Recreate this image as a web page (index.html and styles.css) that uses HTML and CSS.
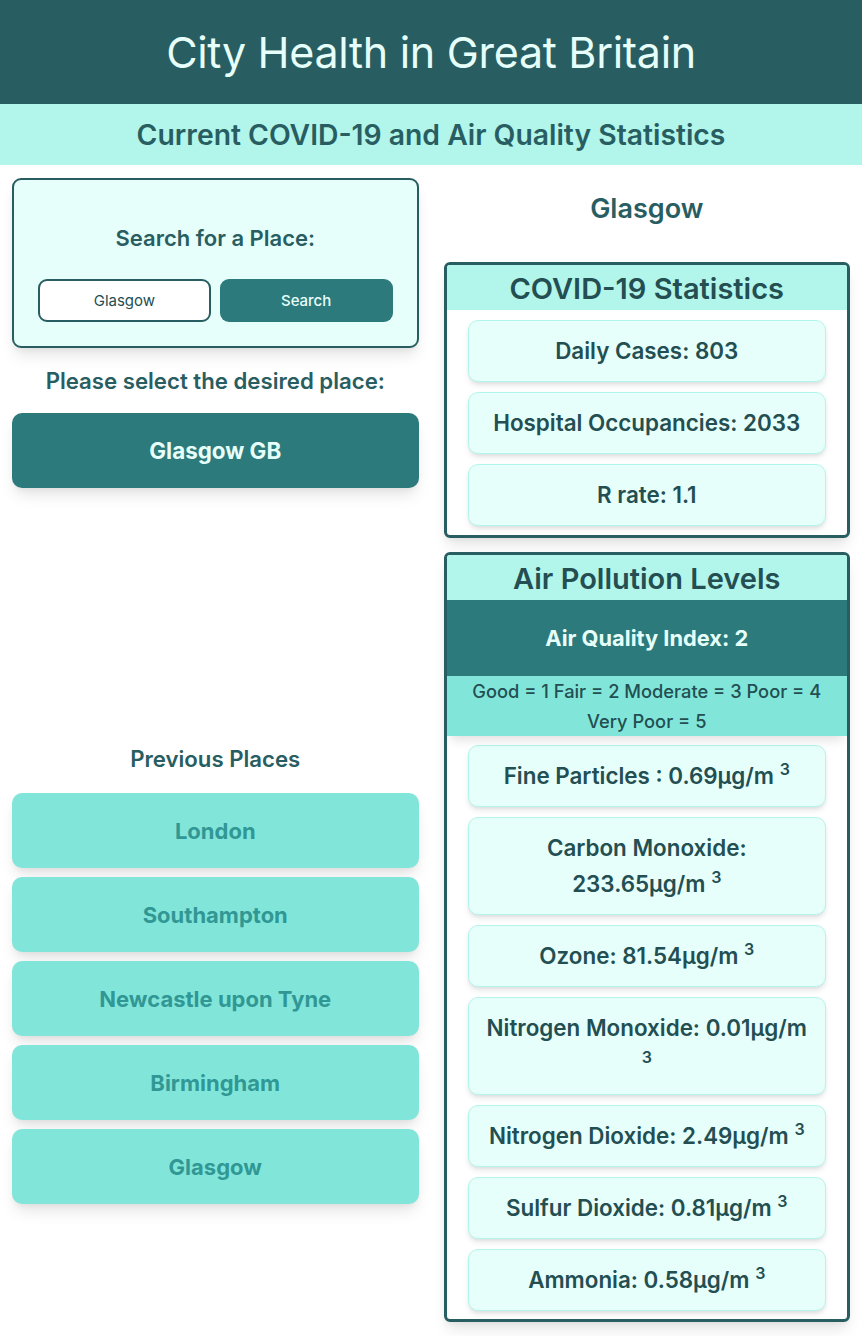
FILE: index.html
```html
<!DOCTYPE html>
<html lang="en">
<head>
<meta charset="utf-8">
<title>City Health in Great Britain</title>
<link rel="stylesheet" href="styles.css">
</head>
<body>
<header class="top">
  <h1 class="title">City Health in Great Britain</h1>
</header>
<div class="subbar">
  <h2 class="subtitle">Current COVID-19 and Air Quality Statistics</h2>
</div>
<main class="layout">
  <section class="col left">
    <div class="search-card">
      <h3 class="search-title">Search for a Place:</h3>
      <div class="search-row">
        <input class="search-input" type="text" value="Glasgow">
        <button class="search-btn">Search</button>
      </div>
    </div>
    <h3 class="section-label">Please select the desired place:</h3>
    <button class="place-btn">Glasgow GB</button>
    <h3 class="section-label prev-label">Previous Places</h3>
    <div class="prev-list">
      <button class="prev-btn">London</button>
      <button class="prev-btn">Southampton</button>
      <button class="prev-btn">Newcastle upon Tyne</button>
      <button class="prev-btn">Birmingham</button>
      <button class="prev-btn">Glasgow</button>
    </div>
  </section>
  <section class="col right">
    <h2 class="city-name">Glasgow</h2>
    <div class="panel">
      <h3 class="panel-head">COVID-19 Statistics</h3>
      <div class="stat-list">
        <div class="stat">Daily Cases: 803</div>
        <div class="stat">Hospital Occupancies: 2033</div>
        <div class="stat">R rate: 1.1</div>
      </div>
    </div>
    <div class="panel air">
      <h3 class="panel-head">Air Pollution Levels</h3>
      <div class="aqi">Air Quality Index: 2</div>
      <div class="legend"><span>Good = 1 Fair = 2 Moderate = 3 Poor = 4</span> <span>Very Poor = 5</span></div>
      <div class="stat-list">
        <div class="stat"><span>Fine Particles : 0.69μg/m</span> <sup>3</sup></div>
        <div class="stat"><span>Carbon Monoxide:</span> <span>233.65μg/m</span> <sup>3</sup></div>
        <div class="stat"><span>Ozone: 81.54μg/m</span> <sup>3</sup></div>
        <div class="stat"><span>Nitrogen Monoxide: 0.01μg/m</span> <sup>3</sup></div>
        <div class="stat"><span>Nitrogen Dioxide: 2.49μg/m</span> <sup>3</sup></div>
        <div class="stat"><span>Sulfur Dioxide: 0.81μg/m</span> <sup>3</sup></div>
        <div class="stat"><span>Ammonia: 0.58μg/m</span> <sup>3</sup></div>
      </div>
    </div>
  </section>
</main>
</body>
</html>
```
FILE: styles.css
```css
* { box-sizing: border-box; }

html, body {
  margin: 0;
  padding: 0;
  background: #ffffff;
  font-family: Inter, "Noto Sans", "Liberation Sans", sans-serif;
  color: #234e52;
}

.top {
  background: #285e61;
  height: 104px;
  display: flex;
  align-items: center;
  justify-content: center;
}

.title {
  margin: 0;
  font-size: 43px;
  font-weight: 400;
  color: #e6fffa;
  letter-spacing: -0.3px;
}

.subbar {
  background: #b2f5ea;
  height: 61px;
  display: flex;
  align-items: center;
  justify-content: center;
}

.subtitle {
  margin: 0;
  font-size: 28.3px;
  font-weight: 600;
  color: #285e61;
}

.layout {
  display: grid;
  grid-template-columns: 1fr 1fr;
  padding: 0 12px 14px 12px;
  column-gap: 25px;
}

.col {
  display: flex;
  flex-direction: column;
}

/* left column */
.search-card {
  margin-top: 13px;
  background: #e6fffa;
  border: 2px solid #285e61;
  border-radius: 9px;
  box-shadow: 0 10px 15px -3px rgba(0,0,0,0.1), 0 4px 6px -2px rgba(0,0,0,0.05);
  padding: 46px 24px 24px 24px;
  text-align: center;
}

.search-title {
  margin: 0 0 29px 0;
  font-size: 22px;
  line-height: 24px;
  font-weight: 600;
  color: #285e61;
}

.search-row {
  display: grid;
  grid-template-columns: 1fr 1fr;
  gap: 9px;
}

.search-input {
  width: 100%;
  min-width: 0;
  height: 43px;
  border: 2px solid #285e61;
  border-radius: 9px;
  background: #ffffff;
  font-family: inherit;
  font-size: 15px;
  color: #234e52;
  text-align: center;
  outline: none;
}

.search-btn {
  width: 100%;
  min-width: 0;
  height: 43px;
  border: none;
  border-radius: 9px;
  background: #2c7a7b;
  color: #e6fffa;
  font-family: inherit;
  font-size: 15px;
  font-weight: 500;
}

.section-label {
  margin: 21px 0 20px 0;
  font-size: 22.2px;
  line-height: 24px;
  font-weight: 600;
  color: #285e61;
  text-align: center;
}

.place-btn {
  height: 75px;
  border: none;
  border-radius: 10px;
  background: #2c7a7b;
  color: #e6fffa;
  font-family: inherit;
  font-size: 22.4px;
  font-weight: 700;
  box-shadow: 0 10px 15px -3px rgba(0,0,0,0.1), 0 4px 6px -2px rgba(0,0,0,0.05);
}

.prev-label {
  margin-top: 259px;
  margin-bottom: 22px;
}

.prev-list {
  display: flex;
  flex-direction: column;
  gap: 9px;
}

.prev-btn {
  height: 75px;
  border: none;
  border-radius: 10px;
  background: #81e6d9;
  color: #319795;
  font-family: inherit;
  font-size: 22px;
  font-weight: 700;
  box-shadow: 0 10px 15px -3px rgba(0,0,0,0.1), 0 4px 6px -2px rgba(0,0,0,0.05);
}

/* right column */
.city-name {
  margin: 29px 0 38px 0;
  font-size: 27px;
  line-height: 30px;
  font-weight: 600;
  color: #285e61;
  text-align: center;
}

.panel {
  border: 3px solid #285e61;
  border-radius: 6px;
  background: #ffffff;
  box-shadow: 0 10px 15px -3px rgba(0,0,0,0.1), 0 4px 6px -2px rgba(0,0,0,0.05);
  overflow: hidden;
}

.panel.air {
  margin-top: 14px;
}

.panel-head {
  margin: 0;
  height: 45px;
  background: #b2f5ea;
  font-size: 29px;
  line-height: 47px;
  font-weight: 600;
  color: #234e52;
  text-align: center;
}

.aqi {
  height: 76px;
  background: #2c7a7b;
  color: #e6fffa;
  font-size: 21.8px;
  font-weight: 700;
  display: flex;
  align-items: center;
  justify-content: center;
}

.legend {
  background: #81e6d9;
  color: #234e52;
  font-size: 18.3px;
  font-weight: 500;
  line-height: 30px;
  text-align: center;
  padding: 0 12px;
  box-shadow: 0 8px 10px -4px rgba(0,0,0,0.12);
  position: relative;
}

.stat-list {
  display: flex;
  flex-direction: column;
  gap: 10px;
  padding: 10px 21px 9px 21px;
}

.panel.air .stat-list {
  padding-top: 9px;
  padding-bottom: 8px;
}

.stat {
  background: #e6fffa;
  border: 1px solid #b2f5ea;
  border-radius: 10px;
  box-shadow: 0 4px 6px -1px rgba(0,0,0,0.1), 0 2px 4px -1px rgba(0,0,0,0.06);
  padding: 12px 16px;
  font-size: 22.4px;
  line-height: 36px;
  font-weight: 600;
  color: #234e52;
  text-align: center;
}

.stat sup {
  font-size: 16px;
  line-height: 0;
  vertical-align: 9px;
}
```
